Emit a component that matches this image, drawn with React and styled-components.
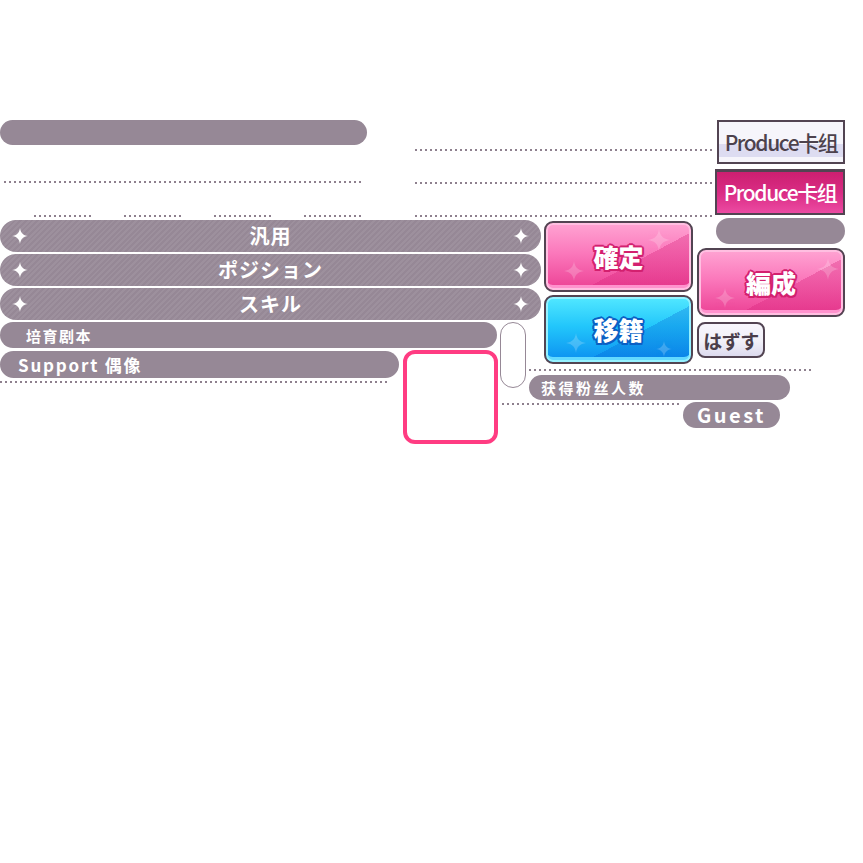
import React from "react";
import styled, { createGlobalStyle, css } from "styled-components";

const GlobalStyle = createGlobalStyle`
  body {
    margin: 0;
    background: #ffffff;
    font-family: "Noto Sans CJK JP", "Noto Sans", sans-serif;
  }
`;

const MAUVE = "#968896";
const INK = "#524452";

const Sheet = styled.div`
  width: 845px;
  padding-top: 120px;
  display: flex;
  flex-direction: column;
`;

/* ---------- top band: title pill, guide dots, produce tabs ---------- */

const TopBand = styled.div`
  height: 98px;
  display: grid;
  grid-template-columns: 415px 298px 132px;
  align-items: start;
`;

const GuideCol = styled.div`
  display: flex;
  flex-direction: column;
`;

const DotLines = styled.div`
  display: flex;
  flex-direction: column;
  padding-top: 29px;
  gap: 31px;
`;

const TabCol = styled.div`
  display: flex;
  flex-direction: column;
  align-items: flex-end;
  gap: 5px;
`;

const Dots = styled.div`
  width: ${(p) => p.$w}px;
  height: 2px;
  flex-shrink: 0;
  background-image: linear-gradient(to right, #8e808e 2px, transparent 2px);
  background-size: 5px 2px;
`;

const WideDots = styled(Dots)`
  margin: 36px 0 0 4px;
`;

const ShortDotRow = styled.div`
  display: flex;
  gap: 32px;
  padding-left: 34px;
  margin-top: 32px;
`;

const Pill = styled.div`
  width: ${(p) => p.$w}px;
  height: ${(p) => p.$h}px;
  flex-shrink: 0;
  align-self: ${(p) => (p.$end ? "flex-end" : "auto")};
  border-radius: ${(p) => p.$h / 2}px;
  background: ${MAUVE};
  display: flex;
  align-items: center;
  justify-content: ${(p) => (p.$center ? "center" : "flex-start")};
  padding-left: ${(p) => p.$pad || 0}px;
  box-sizing: border-box;
  color: #ffffff;
  font-family: "Noto Sans CJK SC", "Noto Sans", sans-serif;
  font-weight: 700;
  font-size: ${(p) => p.$size || 15}px;
  letter-spacing: ${(p) => p.$ls ?? 1.5}px;
  line-height: 1;
  white-space: nowrap;
`;

const ProduceTab = styled.div`
  width: ${(p) => (p.$active ? 130 : 128)}px;
  height: ${(p) => (p.$active ? 46 : 44)}px;
  box-sizing: border-box;
  border: 2px solid ${INK};
  ${(p) =>
    p.$active
      ? css`
          border-top-width: 3px;
          background: linear-gradient(180deg, #cc1f70 0%, #d92c84 50%, #ec4aa2 100%);
          color: #ffffff;
        `
      : css`
          background: linear-gradient(
            180deg,
            #f6f5fb 0%,
            #f6f5fb 56%,
            #dddcf1 56%,
            #dddcf1 88%,
            #f6f5fb 88%
          );
          color: #4d424d;
        `}
  display: flex;
  align-items: center;
  justify-content: center;
  font-family: "Noto Sans CJK SC", "Noto Sans", sans-serif;
  font-weight: 500;
  font-size: 21px;
  letter-spacing: -1.4px;
  line-height: 1;
  white-space: nowrap;
`;

/* ---------- main grid ---------- */

const MainGrid = styled.div`
  display: grid;
  grid-template-columns: 500px 29px 15px 153px 148px;
  grid-template-rows: 104px 47px auto;
  align-items: start;
`;

const FilterStack = styled.div`
  grid-column: 1 / 4;
  grid-row: 1;
  width: 541px;
  margin-top: 2px;
  display: flex;
  flex-direction: column;
  gap: 2px;
`;

const FilterRow = styled.div`
  height: 32px;
  border-radius: 16px;
  background-color: ${MAUVE};
  background-image: repeating-linear-gradient(
    135deg,
    rgba(255, 255, 255, 0.07) 0px,
    rgba(255, 255, 255, 0.07) 2px,
    transparent 2px,
    transparent 4px
  );
  display: grid;
  grid-template-columns: 40px 1fr 40px;
  align-items: center;
  justify-items: center;
  color: #ffffff;
  font-weight: 700;
  font-size: 20px;
  letter-spacing: 1px;
  line-height: 1;
`;

const Sparkle = ({ size = 16 }) => (
  <svg width={size} height={size} viewBox="0 0 16 16">
    <path
      d="M8 0 C8.7 5 11 7.3 16 8 C11 8.7 8.7 11 8 16 C7.3 11 5 8.7 0 8 C5 7.3 7.3 5 8 0Z"
      fill="#ffffff"
    />
  </svg>
);

const ActionCol = styled.div`
  grid-column: 4;
  grid-row: 1 / 3;
  margin-top: 3px;
  display: flex;
  flex-direction: column;
  gap: 3px;
`;

const SideCol = styled.div`
  grid-column: 5;
  grid-row: 1 / 3;
  display: flex;
  flex-direction: column;
  align-items: flex-start;
`;

const tones = {
  pink: css`
    background:
      linear-gradient(152deg, transparent 60%, rgba(214, 30, 120, 0.32) 60%),
      linear-gradient(180deg, #ffa4d3 0%, #fb78bb 45%, #ec4094 100%);
    box-shadow: inset 0 0 0 2px #ffbfe1, inset 0 -5px 0 #ff92cd;
  `,
  blue: css`
    background:
      linear-gradient(152deg, transparent 60%, rgba(0, 90, 210, 0.28) 60%),
      linear-gradient(180deg, #52e8ff 0%, #22c6fb 45%, #0b8ef0 100%);
    box-shadow: inset 0 0 0 2px #94f1ff, inset 0 -5px 0 #62d9ff;
  `,
};

const outlines = {
  pink: "#d3206f",
  blue: "#0a5fc4",
};

const BigButton = styled.div`
  position: relative;
  width: ${(p) => p.$w}px;
  height: ${(p) => p.$h}px;
  margin-top: ${(p) => p.$mt || 0}px;
  box-sizing: border-box;
  border: 2.5px solid ${INK};
  border-radius: 9px;
  overflow: hidden;
  display: flex;
  align-items: center;
  justify-content: center;
  ${(p) => tones[p.$tone]}
  color: #ffffff;
  font-weight: 900;
  font-size: 25px;
  line-height: 1;
  ${(p) => {
    const c = outlines[p.$tone];
    return css`
      text-shadow: 2px 0 0 ${c}, -2px 0 0 ${c}, 0 2px 0 ${c}, 0 -2px 0 ${c},
        1.5px 1.5px 0 ${c}, -1.5px 1.5px 0 ${c}, 1.5px -1.5px 0 ${c},
        -1.5px -1.5px 0 ${c};
    `;
  }}
`;

/* faint sparkles printed on the button face */
const Glint = styled.span`
  position: absolute;
  left: ${(p) => p.$x}px;
  top: ${(p) => p.$y}px;
  opacity: 0.2;
  line-height: 0;
`;

const SmallButton = styled.div`
  width: 68px;
  height: 36px;
  margin-top: 5px;
  box-sizing: border-box;
  border: 2.5px solid ${INK};
  border-radius: 8px;
  background: linear-gradient(180deg, #f7f6fc 0%, #f1f0f8 55%, #dcdaee 100%);
  display: flex;
  align-items: center;
  justify-content: center;
  color: #4a3e4a;
  font-weight: 700;
  font-size: 19px;
  letter-spacing: -0.5px;
  line-height: 1;
`;

const LowerLeft = styled.div`
  grid-column: 1;
  grid-row: 2 / 4;
  display: flex;
  flex-direction: column;
  gap: 3px;
`;

const SupportRow = styled.div`
  display: flex;
  gap: 4px;
  align-items: flex-start;
`;

const SupportCol = styled.div`
  display: flex;
  flex-direction: column;
  gap: 3px;
`;

const Frame = styled.div`
  width: 95px;
  height: 94px;
  margin-top: -1px;
  box-sizing: border-box;
  border: 4px solid #ff3c82;
  border-radius: 12px;
  background: #ffffff;
`;

const Capsule = styled.div`
  grid-column: 2;
  grid-row: 2 / 4;
  width: 26px;
  height: 66px;
  box-sizing: border-box;
  border: 1.5px solid ${MAUVE};
  border-radius: 13px;
  background: #ffffff;
`;

const FanBlock = styled.div`
  grid-column: 2 / 6;
  grid-row: 3;
  display: flex;
  flex-direction: column;
  align-items: flex-start;
`;

const FanHead = styled.div`
  display: flex;
  flex-direction: column;
  gap: 4px;
  padding-left: 29px;
`;

const GuestRow = styled.div`
  display: flex;
  align-items: flex-start;
  gap: 1px;
  padding-left: 2px;
  margin-top: 2px;
`;

const GuestDots = styled(Dots)`
  margin-top: 1px;
`;

const filters = ["汎用", "ポジション", "スキル"];

export default function App() {
  return (
    <>
      <GlobalStyle />
      <Sheet>
        <TopBand>
          <GuideCol>
            <Pill $w={367} $h={25} />
            <WideDots $w={359} />
            <ShortDotRow>
              {[0, 1, 2, 3].map((i) => (
                <Dots key={i} $w={58} />
              ))}
            </ShortDotRow>
          </GuideCol>
          <DotLines>
            <Dots $w={298} />
            <Dots $w={298} />
            <Dots $w={298} />
          </DotLines>
          <TabCol>
            <ProduceTab>Produce卡组</ProduceTab>
            <ProduceTab $active>Produce卡组</ProduceTab>
          </TabCol>
        </TopBand>

        <MainGrid>
          <FilterStack>
            {filters.map((f) => (
              <FilterRow key={f}>
                <Sparkle />
                <span>{f}</span>
                <Sparkle />
              </FilterRow>
            ))}
          </FilterStack>

          <ActionCol>
            <BigButton $w={149} $h={71} $tone="pink">
              <Glint $x={102} $y={6}><Sparkle size={22} /></Glint>
              <Glint $x={18} $y={38}><Sparkle size={20} /></Glint>
              確定
            </BigButton>
            <BigButton $w={149} $h={69} $tone="blue">
              <Glint $x={20} $y={36}><Sparkle size={20} /></Glint>
              <Glint $x={110} $y={44}><Sparkle size={16} /></Glint>
              移籍
            </BigButton>
          </ActionCol>

          <SideCol>
            <Pill $w={129} $h={26} $end />
            <BigButton $w={148} $h={69} $mt={4} $tone="pink">
              <Glint $x={118} $y={8}><Sparkle size={22} /></Glint>
              <Glint $x={16} $y={38}><Sparkle size={20} /></Glint>
              編成
            </BigButton>
            <SmallButton>はずす</SmallButton>
          </SideCol>

          <LowerLeft>
            <Pill $w={497} $h={26} $pad={26} $size={15}>
              培育剧本
            </Pill>
            <SupportRow>
              <SupportCol>
                <Pill $w={399} $h={27} $pad={18} $size={17} $ls={1.8}>
                  Support 偶像
                </Pill>
                <Dots $w={390} />
              </SupportCol>
              <Frame />
            </SupportRow>
          </LowerLeft>

          <Capsule />

          <FanBlock>
            <FanHead>
              <Dots $w={285} />
              <Pill $w={261} $h={25} $pad={12} $size={15} $ls={2.5}>
                获得粉丝人数
              </Pill>
            </FanHead>
            <GuestRow>
              <GuestDots $w={180} />
              <Pill $w={97} $h={26} $center $size={20} $ls={2.5}>
                Guest
              </Pill>
            </GuestRow>
          </FanBlock>
        </MainGrid>
      </Sheet>
    </>
  );
}
